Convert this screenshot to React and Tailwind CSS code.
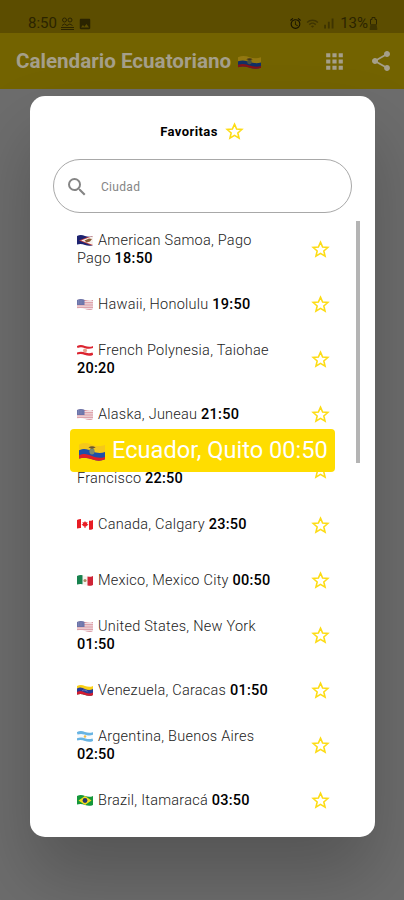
import React, { useId, useState } from "react";
import {
  MdSearch,
  MdShare,
  MdApps,
  MdAlarm,
  MdPhoto,
  MdSignalCellularAlt,
  MdWifi,
} from "react-icons/md";

const CITIES = [
  { flag: "as", name: "American Samoa, Pago Pago", time: "18:50" },
  { flag: "us", name: "Hawaii, Honolulu", time: "19:50" },
  { flag: "pf", name: "French Polynesia, Taiohae", time: "20:20" },
  { flag: "us", name: "Alaska, Juneau", time: "21:50" },
  { flag: "us", name: "United States, San Francisco", time: "22:50" },
  { flag: "ca", name: "Canada, Calgary", time: "23:50" },
  { flag: "mx", name: "Mexico, Mexico City", time: "00:50" },
  { flag: "us", name: "United States, New York", time: "01:50" },
  { flag: "ve", name: "Venezuela, Caracas", time: "01:50" },
  { flag: "ar", name: "Argentina, Buenos Aires", time: "02:50" },
  { flag: "br", name: "Brazil, Itamaracá", time: "03:50" },
];

// Artwork is drawn on a 32x22 box and clipped to a waving outline
const ART = {
  as: (
    <>
      <rect width="32" height="22" fill="#1d2370" />
      <path d="M32 0 4 11l28 11z" fill="#c4403c" />
      <path d="M32 2 8 11l24 9z" fill="#f7f2ee" />
      <path d="M15 11l9-4 6 1-4 5-7 2z" fill="#8a5a32" />
    </>
  ),
  us: (
    <>
      <rect width="32" height="22" fill="#f1dfe2" />
      <path d="M0 3h32M0 7.5h32M0 12h32M0 16.5h32M0 21h32" stroke="#d78f9a" strokeWidth="2" />
      <rect width="15" height="12" fill="#6a72a8" />
      <path d="M2 4h11M2 8h11" stroke="#c9cce4" strokeDasharray="1.5 2" />
    </>
  ),
  pf: (
    <>
      <rect width="32" height="22" fill="#fff" />
      <path d="M0 3q8-3 16 0t16 0M0 18q8-3 16 0t16 0" stroke="#dc2430" strokeWidth="6" fill="none" />
      <circle cx="16" cy="11" r="4" fill="#e7a08c" />
    </>
  ),
  ca: (
    <>
      <rect width="32" height="22" fill="#fff" />
      <path d="M0 0h8v22H0zM24 0h8v22h-8z" fill="#e81c24" />
      <path d="M16 4l2 3 3-1-1 4 3 1-5 4h-1v3h-2v-3h-1l-5-4 3-1-1-4 3 1z" fill="#e81c24" />
    </>
  ),
  mx: (
    <>
      <rect width="32" height="22" fill="#f5f3ef" />
      <path d="M0 0h11v22H0z" fill="#17824e" />
      <path d="M21 0h11v22H21z" fill="#cf2436" />
      <circle cx="16" cy="11" r="3.2" fill="#a98b62" />
    </>
  ),
  ve: (
    <>
      <rect width="32" height="22" fill="#fad016" />
      <path d="M0 7c7-4 11-1 16 1s10 3 16 0v14H0z" fill="#273c96" />
      <path d="M0 14c7-4 11-1 16 1s10 3 16 0v8H0z" fill="#d31c30" />
      <path d="M11 11q5-2 10 2" stroke="#fff" strokeDasharray="1.5 1" fill="none" />
    </>
  ),
  ec: (
    <>
      <rect width="32" height="22" fill="#f5c81a" />
      <path d="M0 9c7-3 11-1 16 1s10 3 16 1v11H0z" fill="#1d4fa8" />
      <path d="M0 15c7-3 11-1 16 1s10 3 16 1v6H0z" fill="#e01f26" />
      <ellipse cx="16" cy="10" rx="3.2" ry="4" fill="#7c8a6c" />
      <path d="M11.5 5.5q4.5-3 9 0l-4.5 1.5z" fill="#6b5630" />
    </>
  ),
  ar: (
    <>
      <rect width="32" height="22" fill="#f7fafc" />
      <path d="M0 4q8-3 16 0t16 0M0 18q8-3 16 0t16 0" stroke="#68b4e3" strokeWidth="6.5" fill="none" />
      <circle cx="16" cy="11" r="2.5" fill="#f0bd4a" />
    </>
  ),
  br: (
    <>
      <rect width="32" height="22" fill="#15983b" />
      <path d="M16 2l13 9-13 9L3 11z" fill="#f7dc1c" />
      <circle cx="16" cy="11" r="4.8" fill="#24366f" />
    </>
  ),
};

const Flag = ({ code, className }) => {
  const id = useId();
  return (
    <svg viewBox="0 0 32 22" preserveAspectRatio="none" className={className}>
      <clipPath id={id}>
        <path d="M0 2C6-1 11 0 16 2S27 4.5 32 2v18c-5 2.5-11 2-16 0S6 17 0 19z" />
      </clipPath>
      <g clipPath={`url(#${id})`}>{ART[code]}</g>
    </svg>
  );
};

const Star = () => (
  <svg width="21" height="21" viewBox="0 0 24 24" fill="none" stroke="#fddc14" strokeWidth="1.8">
    <path d="M12 3.6l2.4 5.600 6 .5-4.600 3.950 1.400 5.900L12 16.400l-5.200 3.150 1.400-5.900L3.600 9.700l6-.5z" />
  </svg>
);

const StatusBar = () => (
  <div className="flex h-[33px] items-center justify-between bg-[#5c4d00] pt-[14px] pr-[26px] pl-[28px] text-[#2b2400]">
    <div className="flex items-center">
      <span className="w-[32px] text-[15px] leading-none">8:50</span>
      <svg width="15" height="14" viewBox="0 0 15 14" fill="none" stroke="currentColor">
        <circle cx="4.5" cy="3" r="2" />
        <circle cx="10" cy="3" r="2" />
        <path d="M2 8.5q2.5-3 5 0 3-3 5.5 0M1 12.5h13M1 10.5h13" />
      </svg>
      <MdPhoto size={14} className="ml-[3px]" />
    </div>
    <div className="flex items-center">
      <MdAlarm size={13} className="text-[#171300]" />
      <MdWifi size={13} className="ml-[4px] opacity-60" />
      <MdSignalCellularAlt size={15} className="ml-[2px] opacity-60" />
      <span className="ml-[4px] text-[15px] leading-none">13%</span>
      <svg width="9" height="13" viewBox="0 0 9 13" fill="none" stroke="currentColor" className="ml-px">
        <path d="M3 2.5V.5h3v2h1.5v5M1.5 7.5v-5H3" />
        <path d="M2 7.5h5l1 5H1z" fill="currentColor" opacity=".6" />
      </svg>
    </div>
  </div>
);

const Toolbar = () => (
  <div className="flex h-[56px] items-center bg-[#736300] pr-[11px] pl-[16px] text-[#a59f8a]">
    <h1 className="text-[20.6px] font-bold whitespace-nowrap">Calendario Ecuatoriano</h1>
    <Flag code="ec" className="mt-[3px] ml-[7px] h-[13px] w-[23px] brightness-[0.6]" />
    <MdApps size={25} className="ml-auto" />
    <MdShare size={24} className="ml-[22px]" />
  </div>
);

const CityRow = ({ city }) => (
  <li className="flex h-[55.15px] items-center justify-between">
    <p className="w-[205px] text-[14.5px] leading-[17.6px] font-light tracking-[0.25px] text-[#222]">
      <Flag code={city.flag} className="mr-[5px] inline-block h-[11px] w-[16px] align-[-1px]" />
      {city.name} <span className="font-medium text-black">{city.time}</span>
    </p>
    <Star />
  </li>
);

const App = () => {
  const [query, setQuery] = useState("");

  return (
    <div className="relative h-[900px] w-[404px] overflow-hidden bg-[#6d6d6d] font-[Roboto,sans-serif]">
      <StatusBar />
      <Toolbar />

      {/* Dialog */}
      <div className="absolute top-[96px] left-[30px] h-[741px] w-[345px] rounded-[15px] bg-white shadow-[0_40px_70px_0px_rgba(0,0,0,0.22)]">
        <div className="flex h-[63px] items-center justify-center pt-[8px]">
          <h2 className="mr-[6px] text-[13px] font-bold tracking-[0.4px] text-black">Favoritas</h2>
          <Star />
        </div>

        <label className="mx-[23px] flex h-[54px] items-center rounded-full border border-[#a8a8a8] pt-px pl-[11px]">
          <MdSearch size={24} className="text-[#858585]" />
          <input
            value={query}
            onChange={(e) => setQuery(e.target.value)}
            placeholder="Ciudad"
            className="ml-[12px] w-[200px] text-[12px] tracking-[0.3px] outline-none placeholder:text-[#858585]"
          />
        </label>

        <div className="relative mt-[8px] flex">
          <ul className="mt-px ml-[47px] w-[254px] shrink-0">
            {CITIES.filter((c) => c.name.toLowerCase().includes(query.toLowerCase())).map((city) => (
              <CityRow key={city.name} city={city} />
            ))}
          </ul>
          <div className="ml-[25px] h-[242px] w-[4px] bg-[#b4b4b4]" />

          {/* Current city, floats over the list */}
          <div className="absolute top-[208px] left-[40px] flex h-[43px] w-[265px] items-center rounded-[4px] bg-[#ffdd00] pl-[9px] text-white">
            <Flag code="ec" className="mt-[3px] h-[18px] w-[26px]" />
            <span className="ml-[7px] text-[23.6px] whitespace-nowrap">Ecuador, Quito 00:50</span>
          </div>
        </div>
      </div>
    </div>
  );
};

export default App;
